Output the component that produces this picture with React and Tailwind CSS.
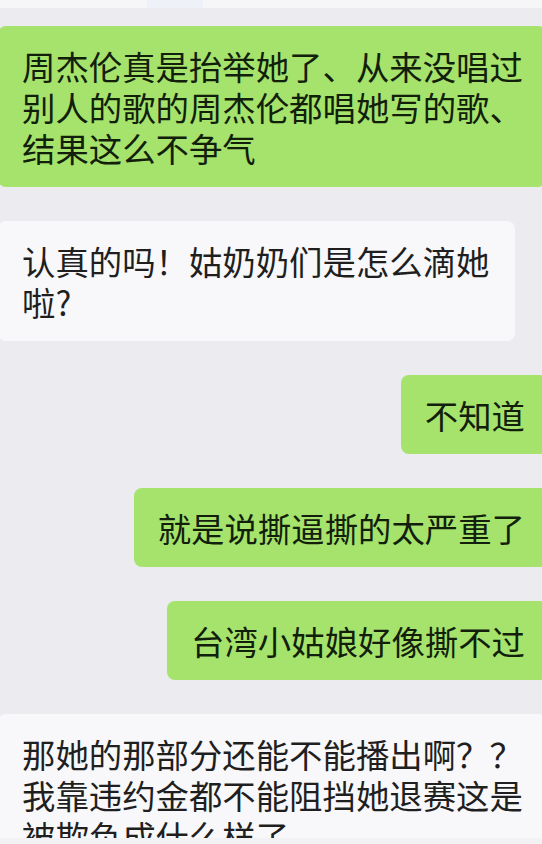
import React from 'react';

const font = { fontFamily: '"Noto Sans CJK SC", "Noto Sans", sans-serif' };

// one chat bubble, lines are given explicitly so the wrap matches the screenshot
const Bubble = ({ mine, lines, className = '' }) => (
  <div
    className={`py-[19px] pl-[24px] pr-[23px] rounded-[8px] text-[33.4px] leading-[41px] whitespace-nowrap ${
      mine ? 'bg-[#a5e36c] text-[#12200b]' : 'bg-[#f8f8fa] text-[#1f1f1f]'
    } ${className}`}
  >
    {lines.map((l, i) => (
      <div key={i}>{l}</div>
    ))}
  </div>
);

export default function App() {
  return (
    <div className="w-[542px] h-[844px] overflow-hidden bg-[#ebebf0] flex flex-col" style={font}>
      {/* top edge of the previous screen */}
      <div className="h-[8px] bg-[#f6f6f8] shrink-0 flex">
        <div className="ml-[147px] w-[56px] h-full bg-[#eef1f7]" />
      </div>

      <div className="flex-1 flex flex-col gap-[34px] pt-[18px] overflow-hidden">
        <Bubble
          mine
          className="self-start -ml-[2px] -mr-[8px]"
          lines={['周杰伦真是抬举她了、从来没唱过', '别人的歌的周杰伦都唱她写的歌、', '结果这么不争气']}
        />
        <Bubble
          className="self-start -ml-[2px] w-[517px]"
          lines={['认真的吗！姑奶奶们是怎么滴她', '啦?']}
        />
        <Bubble mine className="self-end -mr-[6px]" lines={['不知道']} />
        <Bubble mine className="self-end -mr-[6px]" lines={['就是说撕逼撕的太严重了']} />
        <Bubble mine className="self-end -mr-[6px]" lines={['台湾小姑娘好像撕不过']} />
        <Bubble
          className="self-start -ml-[2px] -mr-[8px] shrink-0"
          lines={['那她的那部分还能不能播出啊？？', '我靠违约金都不能阻挡她退赛这是', '被欺负成什么样了']}
        />
      </div>

      {/* input bar edge */}
      <div className="h-[6px] bg-[#f2f2f4] shrink-0" />
    </div>
  );
}
